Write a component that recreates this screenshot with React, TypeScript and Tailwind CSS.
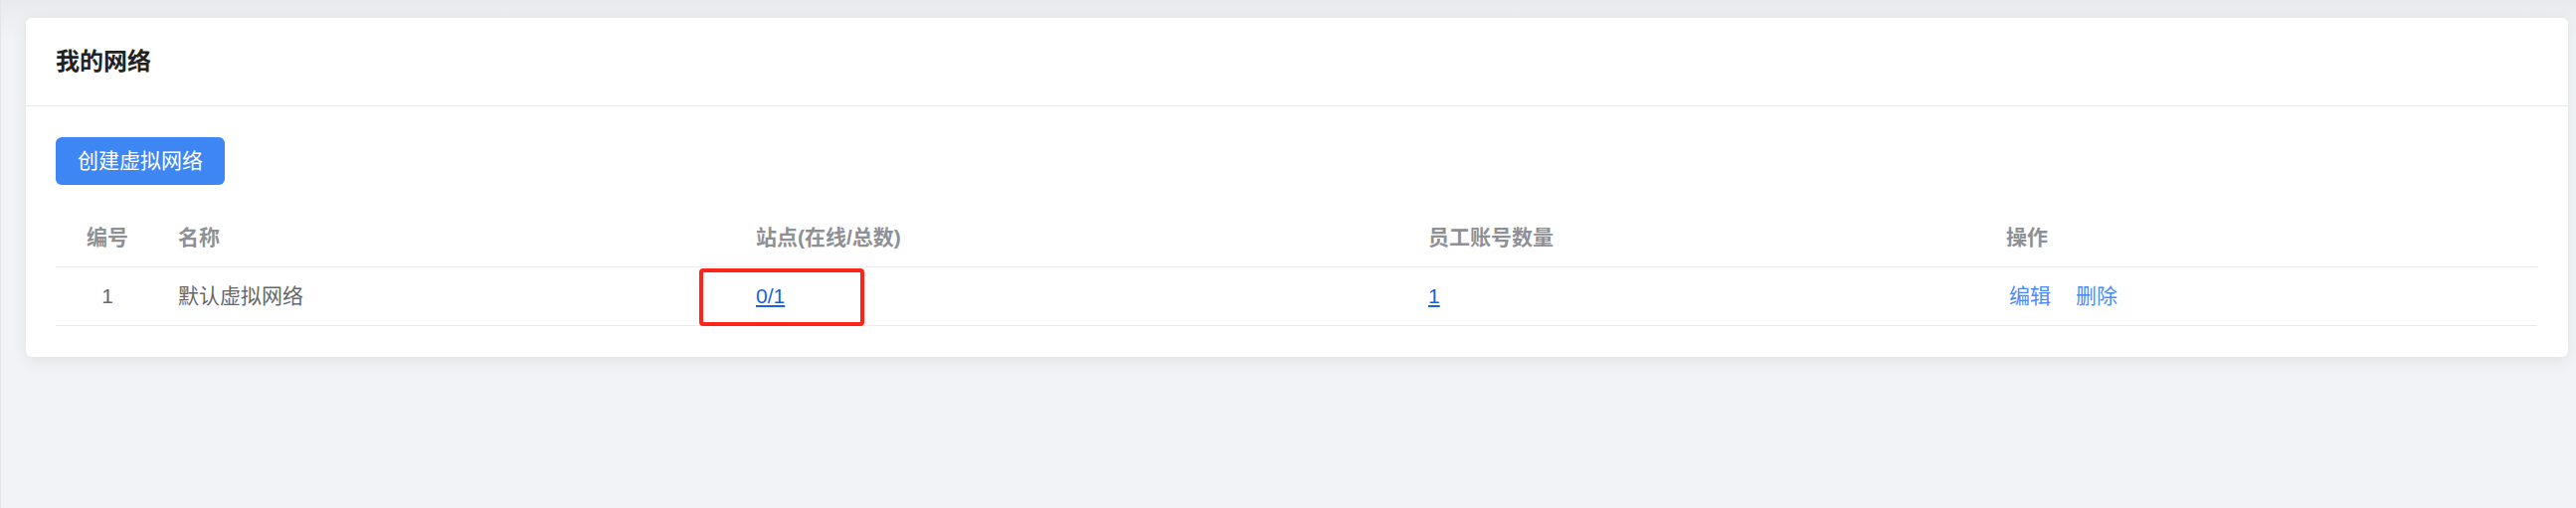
const font = { fontFamily: '"Liberation Sans", "Noto Sans CJK SC", sans-serif' };

const columns = ["编号", "名称", "站点(在线/总数)", "员工账号数量", "操作"];

const rows = [{ id: 1, name: "默认虚拟网络", sites: "0/1", staff: "1" }];

export default function App() {
  return (
    <div style={font} className="min-h-[511px] w-full bg-[#f2f3f7] border-l border-[#e3e4e9] bg-gradient-to-b from-[#e9eaee] to-[#f2f3f7] bg-[length:100%_40px] bg-no-repeat pl-[25px] pr-2 pt-[18px]">
      {/* Card */}
      <div className="rounded-md bg-white shadow-[0_4px_16px_rgba(0,0,0,0.07)]">
        <div className="flex h-[89px] items-center border-b border-[#e8e9ee] px-[30px]">
          <h1 className="text-[24px] font-bold text-[#222]">我的网络</h1>
        </div>

        <div className="px-[30px] pt-[31px] pb-[31px]">
          <button className="h-12 rounded-md bg-[#3f86f5] px-[22px] text-[21px] text-white">
            创建虚拟网络
          </button>

          <div className="mt-6 w-[2495px]">
            {/* header row */}
            <div className="grid h-[59px] grid-cols-[104px_581px_676px_581px_1fr] items-center border-b border-[#eaebf0] text-[21px] font-bold text-[#8e9094]">
              {columns.map((c, i) => (
                <div key={c} className={i === 0 ? "text-center" : "pl-[19px]"}>{c}</div>
              ))}
            </div>

            {rows.map((r) => (
              <div key={r.id} className="grid h-[59px] grid-cols-[104px_581px_676px_581px_1fr] items-center border-b border-[#eaebf0] text-[21px] text-[#65676b]">
                <div className="text-center">{r.id}</div>
                <div className="pl-[19px]">{r.name}</div>
                <div className="relative h-full flex items-center pl-[19px]">
                  <a className="text-[#1d5fe0] underline">{r.sites}</a>
                  {/* annotation box */}
                  <div className="absolute left-[-38px] top-[1px] h-[58px] w-[166px] rounded-[4px] border-4 border-[#ff2419]" />
                </div>
                <div className="pl-[19px]">
                  <a className="text-[#1d5fe0] underline">{r.staff}</a>
                </div>
                <div className="flex gap-[25px] pl-[22px] text-[#4a8cf7]">
                  <a>编辑</a>
                  <a>删除</a>
                </div>
              </div>
            ))}
          </div>
        </div>
      </div>
    </div>
  );
}
